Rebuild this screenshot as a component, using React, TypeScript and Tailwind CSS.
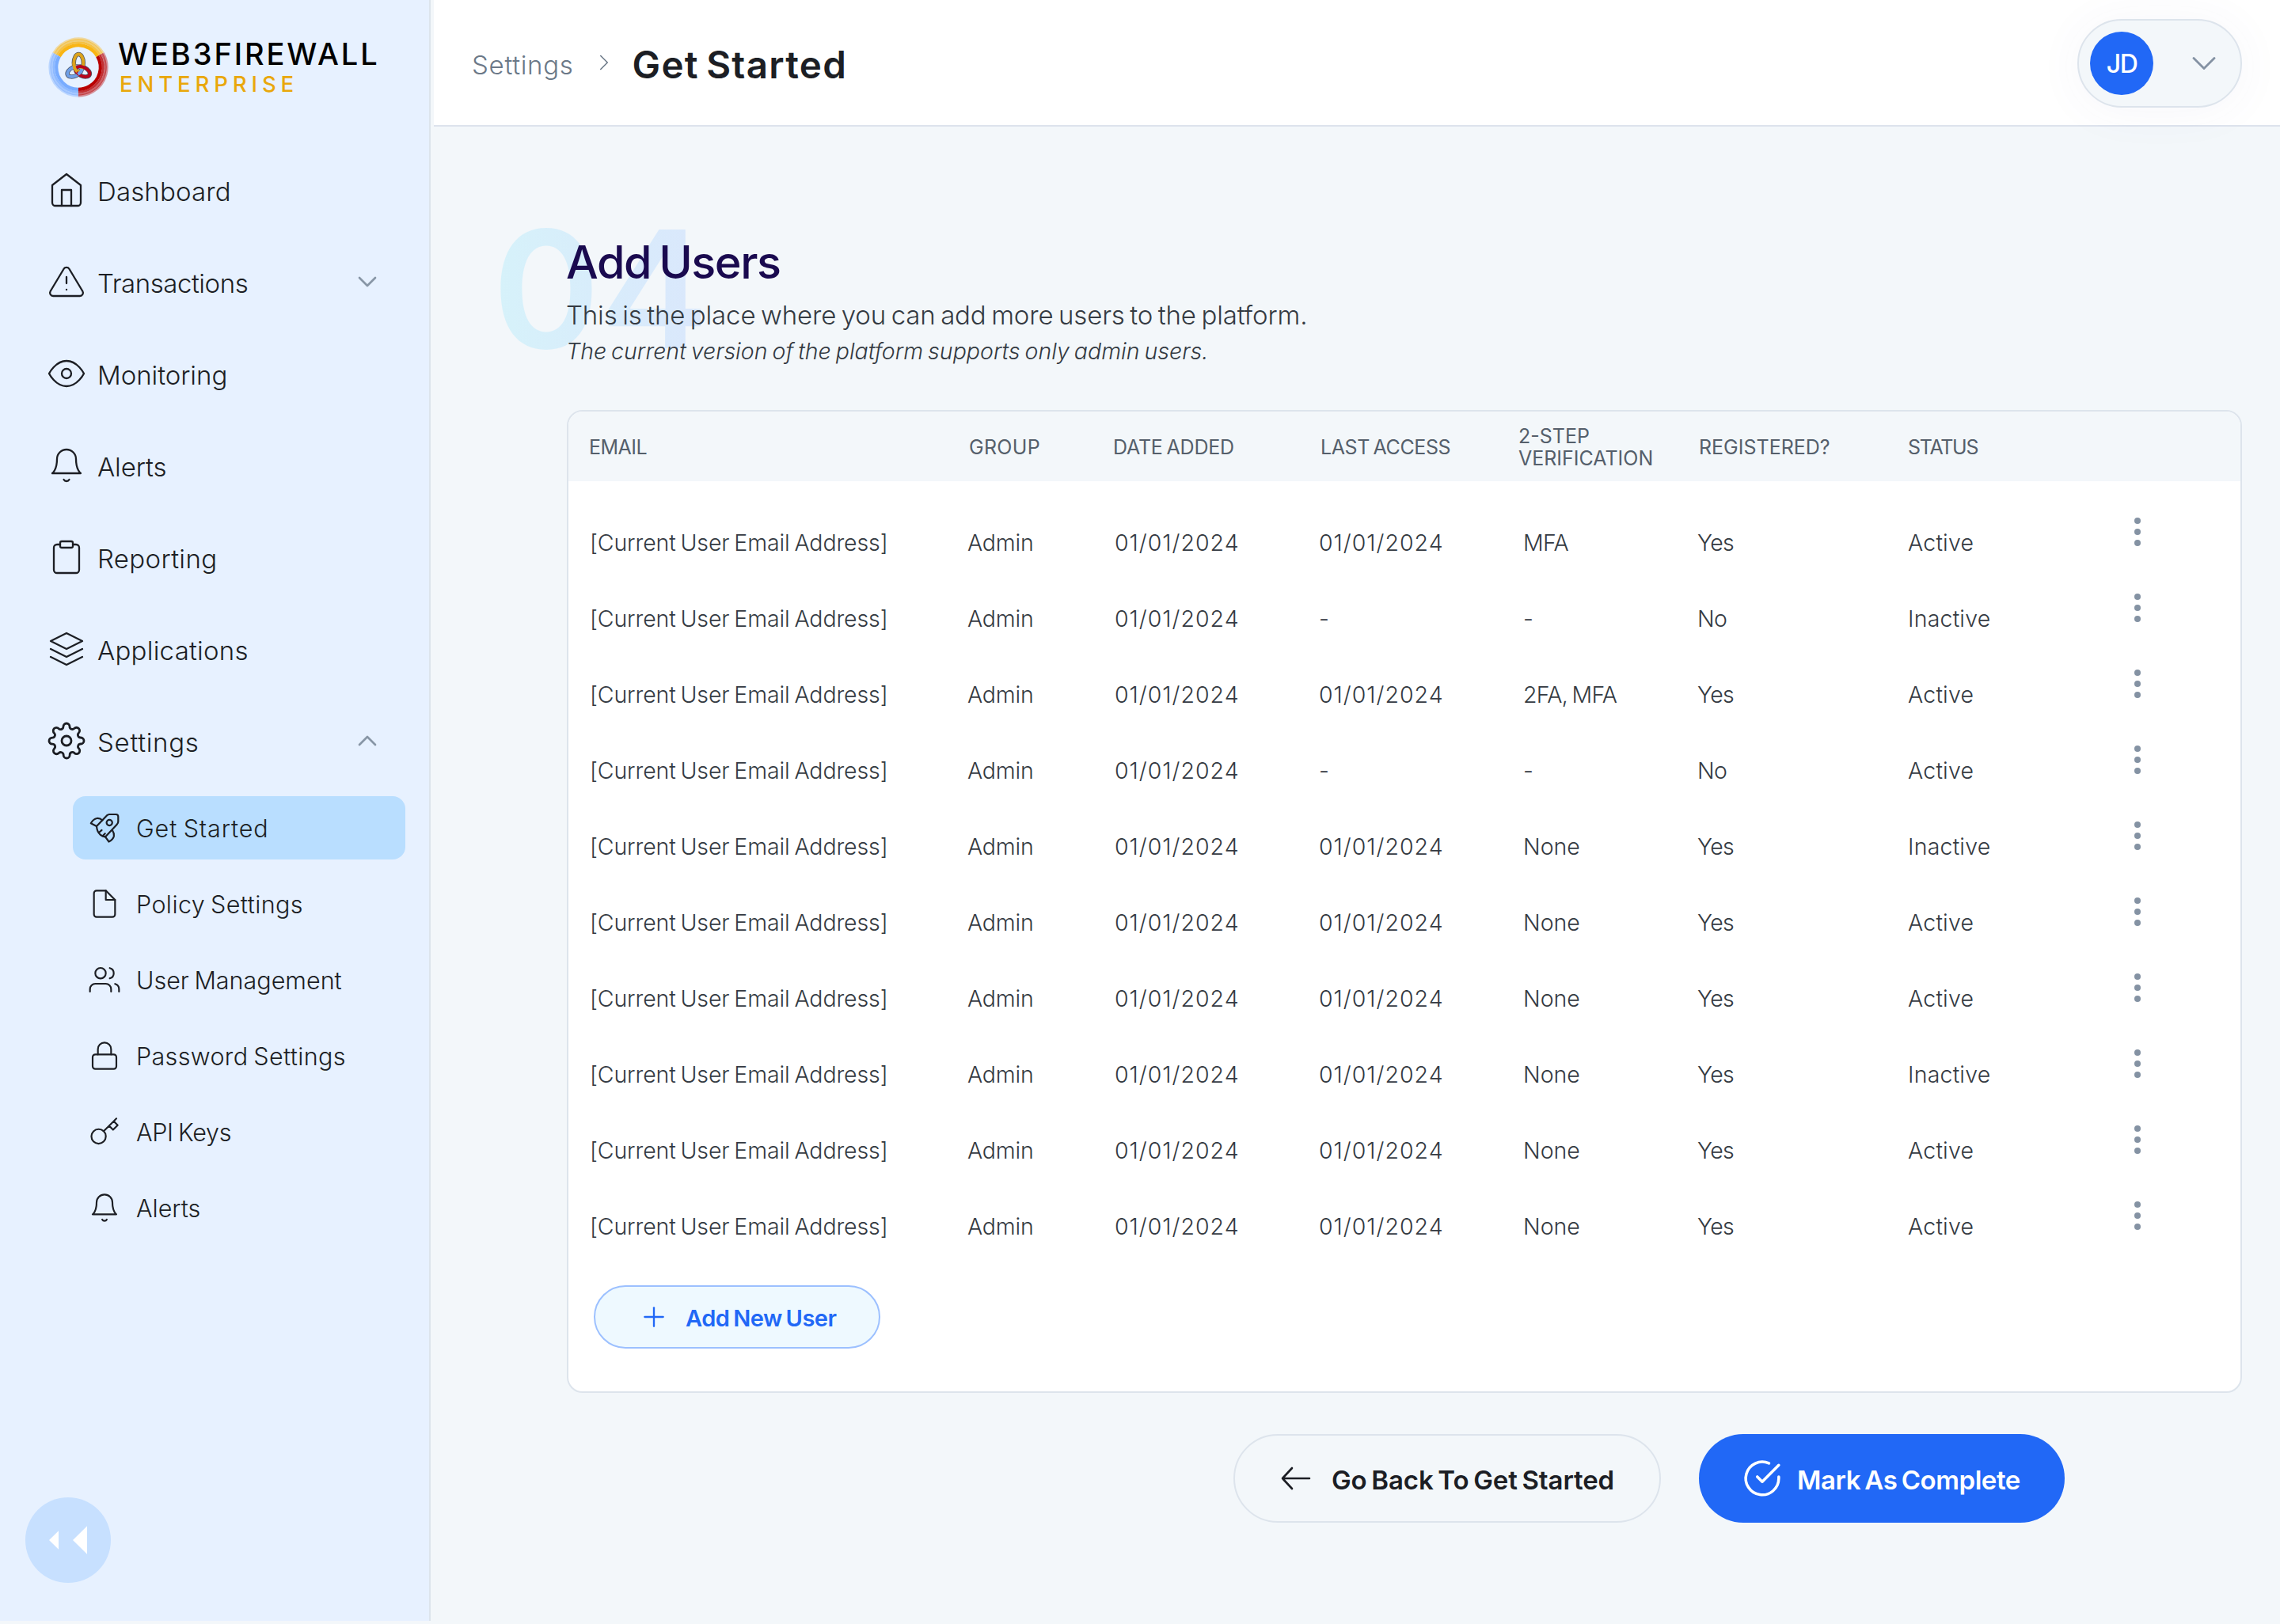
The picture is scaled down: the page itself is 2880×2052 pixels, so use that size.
import React from "react";
import {
  FiAlertTriangle,
  FiBell,
  FiCheckCircle,
  FiChevronDown,
  FiChevronRight,
  FiChevronUp,
  FiClipboard,
  FiEye,
  FiFile,
  FiHome,
  FiKey,
  FiLayers,
  FiLock,
  FiPlus,
  FiSettings,
  FiUsers,
} from "react-icons/fi";

type IconProps = { size?: number; strokeWidth?: number; className?: string };

type NavItem = {
  label: string;
  icon: React.ComponentType<IconProps>;
  chevron?: "up" | "down";
  tracking: string;
  stroke?: number;
};

type User = {
  access: string;
  verification: string;
  registered: string;
  status: string;
};

const RocketIcon = ({ size = 40 }: IconProps) => (
  <svg
    width={size}
    height={size}
    viewBox="0 0 40 40"
    fill="none"
    stroke="currentColor"
    strokeWidth={2.2}
    strokeLinecap="round"
    strokeLinejoin="round"
  >
    <path d="M26 3h8.5a2.8 2.8 0 0 1 2.8 2.8V12a5 5 0 0 1-1.6 3.7L21 31.4c-2.3-.2-4.3-1-6.1-2.5-2.7-2.3-4.5-5.8-4.9-10.9L23.4 4.1A4 4 0 0 1 26 3Z" />
    <circle cx="26.2" cy="13.5" r="3.6" />
    <path d="M10 18 2.8 14.3C4.6 11 7.2 8.6 10.4 8c2.5-.3 4.9.5 6.9 2.5" />
    <path d="m21 31.4 4.5 6.1c3.3-1.6 5.7-4 6.4-7 .4-2.3-.1-4.5-1.6-6.7" />
    <path d="m13.5 25.5 3-2.6M18.4 29.5l2.3-2.3" />
  </svg>
);

const ArrowIcon = () => (
  <svg
    width="40"
    height="32"
    viewBox="0 0 40 32"
    fill="none"
    stroke="currentColor"
    strokeWidth={2.6}
    strokeLinecap="round"
    strokeLinejoin="round"
  >
    <path d="M37 16H3M15 3 3 16l12 13" />
  </svg>
);

const navItems: NavItem[] = [
  { label: "Dashboard", icon: FiHome, tracking: "tracking-[0.15px]" },
  { label: "Transactions", icon: FiAlertTriangle, chevron: "down", tracking: "tracking-[-0.45px]" },
  { label: "Monitoring", icon: FiEye, tracking: "tracking-[-0.05px]" },
  { label: "Alerts", icon: FiBell, tracking: "tracking-[-0.1px]" },
  { label: "Reporting", icon: FiClipboard, tracking: "tracking-[0.35px]" },
  { label: "Applications", icon: FiLayers, tracking: "tracking-[0.25px]" },
  { label: "Settings", icon: FiSettings, chevron: "up", tracking: "tracking-[0.7px]", stroke: 1.4 },
];

const settingsItems: NavItem[] = [
  { label: "Get Started", icon: RocketIcon, tracking: "tracking-[0.9px]" },
  { label: "Policy Settings", icon: FiFile, tracking: "tracking-[0.4px]" },
  { label: "User Management", icon: FiUsers, tracking: "tracking-normal" },
  { label: "Password Settings", icon: FiLock, tracking: "tracking-[0.35px]" },
  { label: "API Keys", icon: FiKey, tracking: "tracking-[-0.3px]" },
  { label: "Alerts", icon: FiBell, tracking: "tracking-normal" },
];

const users: User[] = [
  { access: "01/01/2024", verification: "MFA", registered: "Yes", status: "Active" },
  { access: "-", verification: "-", registered: "No", status: "Inactive" },
  { access: "01/01/2024", verification: "2FA, MFA", registered: "Yes", status: "Active" },
  { access: "-", verification: "-", registered: "No", status: "Active" },
  { access: "01/01/2024", verification: "None", registered: "Yes", status: "Inactive" },
  { access: "01/01/2024", verification: "None", registered: "Yes", status: "Active" },
  { access: "01/01/2024", verification: "None", registered: "Yes", status: "Active" },
  { access: "01/01/2024", verification: "None", registered: "Yes", status: "Inactive" },
  { access: "01/01/2024", verification: "None", registered: "Yes", status: "Active" },
  { access: "01/01/2024", verification: "None", registered: "Yes", status: "Active" },
];

// one third of the ring, drawn as fading bands
function RingThird({ color, rotate }: { color: string; rotate: number }) {
  const bands = [
    { r: 27.8, opacity: 1 },
    { r: 31.3, opacity: 0.8 },
    { r: 34.2, opacity: 0.6 },
    { r: 36.2, opacity: 0.4 },
  ];
  return (
    <g transform={`rotate(${rotate} 38 38)`} stroke={color} fill="none">
      {bands.map(({ r, opacity }, i) => (
        <circle
          key={r}
          cx="38"
          cy="38"
          r={r}
          pathLength={3}
          strokeDasharray="1 2"
          strokeWidth={i === 0 ? 4.2 : 2.9}
          opacity={opacity}
        />
      ))}
    </g>
  );
}

function Logo() {
  return (
    <div className="flex items-start pt-[47px] pl-[61px]">
      <svg width="76" height="76" viewBox="0 0 76 76" fill="none">
        <RingThird color="#f9b514" rotate={-150} />
        <RingThird color="#b90000" rotate={-30} />
        <RingThird color="#79acff" rotate={90} />
        <g strokeWidth="5.4" stroke="#4c5466">
          <ellipse cx="33" cy="43.5" rx="9.5" ry="5.6" transform="rotate(-25 33 43.5)" />
          <ellipse cx="43.5" cy="43.5" rx="9.5" ry="5.6" transform="rotate(25 43.5 43.5)" />
          <ellipse cx="38.3" cy="32.5" rx="6" ry="11" />
        </g>
        <g strokeWidth="3.8">
          <ellipse cx="33" cy="43.5" rx="9.5" ry="5.6" transform="rotate(-25 33 43.5)" stroke="#6f9fe6" />
          <ellipse cx="38.3" cy="32.5" rx="6" ry="11" stroke="#dca41c" />
          <ellipse cx="43.5" cy="43.5" rx="9.5" ry="5.6" transform="rotate(25 43.5 43.5)" stroke="#b8061c" />
          <path d="M32.3 32.5c0 6 1.6 9 4.3 10.8" stroke="#dca41c" />
          <path d="M37.5 47c3-2.3 4.8-4.5 5-7" stroke="#6f9fe6" />
        </g>
      </svg>
      <div className="ml-3 flex flex-col whitespace-nowrap">
        <span className="mt-0.5 text-[38px] leading-[38px] font-medium tracking-[2.9px] text-black">
          WEB3FIREWALL
        </span>
        <span className="mt-[6px] ml-[2px] text-[27.5px] leading-[27px] font-medium tracking-[5.9px] text-[#e9a70b]">
          ENTERPRISE
        </span>
      </div>
    </div>
  );
}

function Sidebar() {
  return (
    <aside className="flex h-[2048px] w-[544px] shrink-0 flex-col border-r-2 border-[#dce4ec] bg-[#e7f1ff] text-[#1c1e24]">
      <div className="h-[182px]">
        <Logo />
      </div>
      <nav className="flex flex-col">
        {navItems.map(({ label, icon: Icon, chevron, tracking, stroke }) => (
          <a key={label} className="flex h-[116px] items-center pr-[58px] pl-[60px]">
            <Icon size={48} strokeWidth={stroke ?? 1.15} />
            <span className={`mt-1.5 ml-[15px] text-[33px] font-[360] whitespace-nowrap ${tracking}`}>{label}</span>
            {chevron && (
              <span className="ml-auto text-[#8896a6]">
                {chevron === "up" ? (
                  <FiChevronUp size={40} strokeWidth={1.6} />
                ) : (
                  <FiChevronDown size={40} strokeWidth={1.6} />
                )}
              </span>
            )}
          </a>
        ))}
      </nav>
      <nav className="mt-3 mr-[30px] ml-[92px] flex flex-col gap-4">
        {settingsItems.map(({ label, icon: Icon, tracking }, i) => (
          <a
            key={label}
            className={`flex h-20 items-center rounded-2xl pl-5 ${i === 0 ? "bg-[#b9deff]" : ""}`}
          >
            <Icon size={40} strokeWidth={1.3} />
            <span
              className={`mt-0.5 ml-5 text-[30.5px] font-[360] whitespace-nowrap [word-spacing:-2px] ${tracking}`}
            >
              {label}
            </span>
          </a>
        ))}
      </nav>
      <button className="mt-auto mb-12 ml-8 flex size-[108px] items-center rounded-full bg-[#c7e0ff] pl-[30px] text-white">
        <svg width="48" height="36" viewBox="0 0 48 36" fill="currentColor">
          <path d="M0 18 12 6.2v23.6ZM30 18 48 .2v35.6Z" />
        </svg>
      </button>
    </aside>
  );
}

function Header() {
  return (
    <header className="flex h-40 shrink-0 items-center border-b-2 border-[#dde3ed] bg-white px-12">
      <span className="mt-2 text-[33px] font-[360] tracking-[0.7px] text-[#6b7887]">Settings</span>
      <FiChevronRight className="ml-[21px] text-[#6b7887]" size={34} strokeWidth={1.1} />
      <h1 className="mt-1.5 ml-[19px] text-[47.5px] font-semibold tracking-[1.3px] whitespace-nowrap text-[#1c1e24] [word-spacing:-4px]">
        Get Started
      </h1>
      <div className="mt-0.5 ml-auto flex h-[112px] w-[208px] items-center rounded-full border-2 border-[#dde4ec] bg-[#f3f7fa] pr-[20px] pl-[14px] shadow-[0_4px_60px_rgba(80,80,160,0.05)]">
        <div className="flex size-20 items-center justify-center rounded-full bg-[#2168f6] pt-0.5 text-[32px] font-medium tracking-[-1.5px] text-white">
          JD
        </div>
        <FiChevronDown className="ml-auto text-[#8492a3]" size={52} strokeWidth={1.3} />
      </div>
    </header>
  );
}

function UsersTable() {
  return (
    <section className="mt-[50px] overflow-hidden rounded-[20px] border-2 border-[#dde4ec] bg-white">
      <div className="grid h-[88px] grid-cols-[480px_182px_262px_250px_228px_264px_1fr] items-center bg-[#f3f7fa] pt-0.5 pl-[26px] text-[25px] leading-7 whitespace-nowrap text-[#555f6b] [word-spacing:-2px]">
        <span className="tracking-[-0.5px]">EMAIL</span>
        <span className="tracking-[0.3px]">GROUP</span>
        <span className="tracking-[-0.2px]">DATE ADDED</span>
        <span className="tracking-[-0.4px]">LAST ACCESS</span>
        <span>
          2-STEP
          <br />
          VERIFICATION
        </span>
        <span>REGISTERED?</span>
        <span className="tracking-[-1.3px]">STATUS</span>
      </div>
      <div className="pt-[30px] text-[28.5px] font-[360] whitespace-nowrap text-[#343a42] [word-spacing:-2px]">
        {users.map((user, i) => (
          <div
            key={i}
            className="grid h-24 grid-cols-[477px_186px_258px_258px_220px_266px_286px_1fr] items-center pl-[27px]"
          >
            <span className="tracking-[-0.12px]">[Current User Email Address]</span>
            <span className="tracking-[-0.2px]">Admin</span>
            <span className="tracking-[1px]">01/01/2024</span>
            <span className="tracking-[1px]">{user.access}</span>
            <span className={user.verification === "None" ? "" : "tracking-[-0.7px]"}>{user.verification}</span>
            <span className="tracking-[-0.6px]">{user.registered}</span>
            <span className="tracking-[0.2px]">{user.status}</span>
            <span className="mb-7 flex flex-col gap-1.5">
              <i className="size-2 rounded-full bg-[#8492a3]" />
              <i className="size-2 rounded-full bg-[#8492a3]" />
              <i className="size-2 rounded-full bg-[#8492a3]" />
            </span>
          </div>
        ))}
      </div>
      <button className="mt-[26px] mb-[54px] ml-8 flex h-20 w-[362px] items-center rounded-full border-2 border-[#9cc0ff] bg-[#eef9ff] pl-[54px] text-[29px] font-semibold tracking-[-0.5px] whitespace-nowrap text-[#2168f6] [word-spacing:-2px]">
        <FiPlus size={40} strokeWidth={1.4} />
        <span className="mt-1 ml-[20px]">Add New User</span>
      </button>
    </section>
  );
}

export default function App() {
  return (
    <div className="flex h-[2052px] w-full gap-1 overflow-hidden bg-[#f3f7fa] font-['Inter',sans-serif]">
      <Sidebar />
      <div className="flex flex-1 flex-col">
        <Header />
        <main className="relative pt-[135px] pr-12 pl-[168px]">
          {/* oversized step number sits behind the title */}
          <span className="absolute top-[102px] left-[74px] bg-linear-to-r from-[#d6f2fa] to-[#dae7fc] bg-clip-text text-[206px] leading-[206px] font-semibold text-transparent">
            04
          </span>
          <div className="relative ml-[-1px] whitespace-nowrap">
            <h2 className="text-[57.5px] leading-[72px] font-medium tracking-[-1.4px] text-[#1a0a4f] [word-spacing:-4px]">
              Add Users
            </h2>
            <p className="mt-[7px] text-[33px] leading-[48px] font-[360] tracking-[-0.15px] text-[#343a42] [word-spacing:-2.5px]">
              This is the place where you can add more users to the platform.
            </p>
            <p className="mt-[-2px] text-[28.5px] leading-[48px] font-[360] text-[#343a42] italic [word-spacing:-2px]">
              The current version of the platform supports only admin users.
            </p>
          </div>
          <UsersTable />
          <div className="mt-[52px] mr-[224px] flex justify-end gap-12 text-[33px] font-semibold whitespace-nowrap">
            <button className="flex h-[112px] w-[540px] items-center rounded-full border-2 border-[#dde4ec] pl-[57px] tracking-[-0.1px] text-[#1c1e24] [word-spacing:-2.5px]">
              <ArrowIcon />
              <span className="mt-1.5 ml-[25px]">Go Back To Get Started</span>
            </button>
            <button className="flex h-[112px] w-[462px] items-center rounded-full bg-[#2168f6] pl-[55px] tracking-[-0.45px] text-white [word-spacing:-2.5px]">
              <FiCheckCircle size={50} strokeWidth={1.7} />
              <span className="mt-1.5 ml-[19px]">Mark As Complete</span>
            </button>
          </div>
        </main>
      </div>
    </div>
  );
}
